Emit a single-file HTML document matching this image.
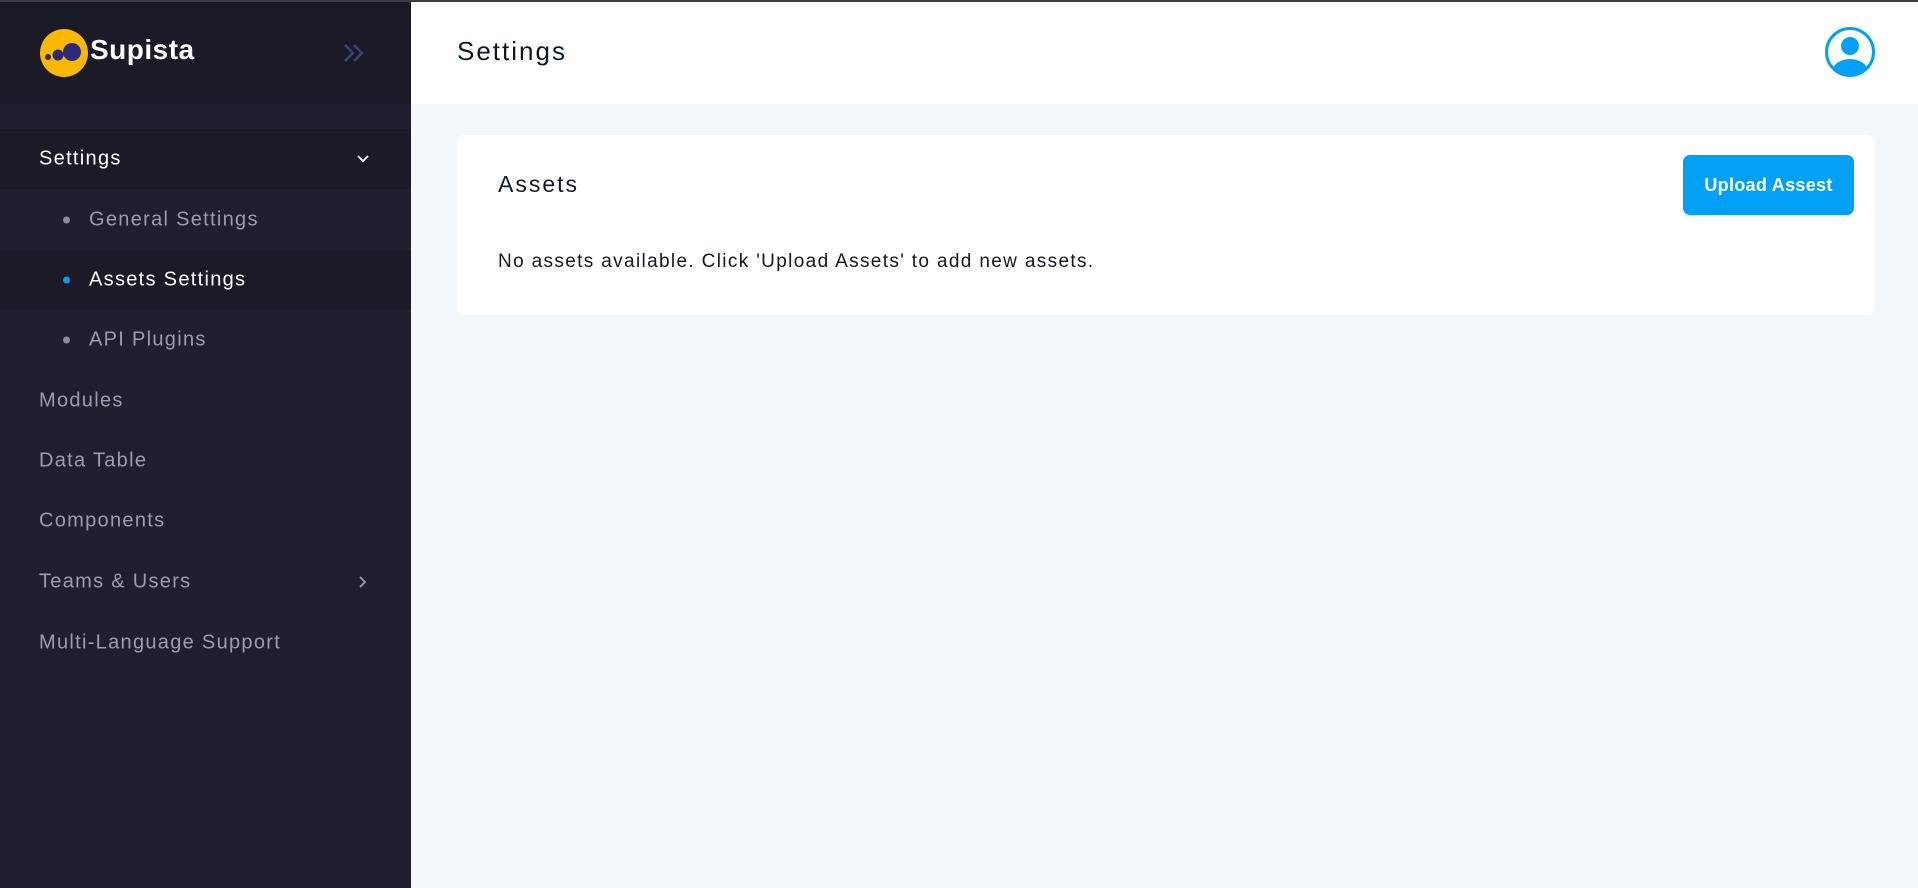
<!DOCTYPE html>
<html><head><meta charset="utf-8"><style>
*{margin:0;padding:0;box-sizing:border-box}
body{width:1918px;height:886px;overflow:hidden;background:#f4f7fa;font-family:"Liberation Sans",sans-serif;position:relative;border-top:2px solid #3a3d44}
.sb{position:absolute;left:0;top:0;width:411px;height:886px;background:#1f1f2d}
.logo{position:absolute;left:0;top:0;width:411px;height:102px;background:#1a1b27}
.row{position:absolute;left:0;width:411px;height:60px}
.it{position:absolute;left:39px;font-size:20px;color:#9c9cb0;transform:translateY(-50%);letter-spacing:1.3px;white-space:nowrap}
.sub{left:89px}
.dot{position:absolute;left:63px;width:7px;height:7px;border-radius:50%;background:#8e8ea0;transform:translateY(-50%)}
.main{position:absolute;left:411px;top:0;right:0;height:102px;background:#fff}
</style></head><body>
<div class="sb">
 <div class="logo"></div>
 <div class="row" style="top:127px;background:#1a1b27"></div>
 <div class="row" style="top:248px;background:#1a1b27"></div>
 <svg style="position:absolute;left:39px;top:26px" width="50" height="50" viewBox="0 0 50 50"><circle cx="25" cy="25" r="24" fill="#fbb801"/><circle cx="33" cy="24" r="9" fill="#2b2a7a"/><circle cx="19" cy="27" r="5.5" fill="#2b2a7a"/><circle cx="9" cy="29" r="3" fill="#2b2a7a"/></svg>
 <div style="position:absolute;left:90px;top:32px;font-size:28px;font-weight:bold;color:#fff;letter-spacing:0.5px">Supista</div>
 <svg style="position:absolute;left:343px;top:41px" width="22" height="20" viewBox="0 0 22 20"><path d="M2 2l8 8-8 8M11 2l8 8-8 8" fill="none" stroke="#3f3f78" stroke-width="2.5"/></svg>
 <div class="it" style="top:157px;color:#fff">Settings</div>
 <svg style="position:absolute;left:356px;top:152px" width="14" height="10" viewBox="0 0 14 10"><path d="M2 2l5 5 5-5" fill="none" stroke="#fff" stroke-width="1.8"/></svg>
 <div class="dot" style="top:218px"></div><div class="it sub" style="top:218px">General Settings</div>
 <div class="dot" style="top:278px;background:#03a1f6"></div><div class="it sub" style="top:278px;color:#fff">Assets Settings</div>
 <div class="dot" style="top:338px"></div><div class="it sub" style="top:338px">API Plugins</div>
 <div class="it" style="top:399px">Modules</div>
 <div class="it" style="top:459px">Data Table</div>
 <div class="it" style="top:519px">Components</div>
 <div class="it" style="top:580px">Teams &amp; Users</div>
 <svg style="position:absolute;left:358px;top:573px" width="10" height="14" viewBox="0 0 10 14"><path d="M2 2l5 5-5 5" fill="none" stroke="#9c9cb0" stroke-width="1.8"/></svg>
 <div class="it" style="top:641px">Multi-Language Support</div>
</div>
<div class="main">
 <div style="position:absolute;left:46px;top:34px;font-size:26px;color:#111827;letter-spacing:2px">Settings</div>
 <svg style="position:absolute;left:1413px;top:24px" width="52" height="52" viewBox="0 0 52 52"><defs><clipPath id="c"><circle cx="26" cy="26" r="23"/></clipPath></defs><circle cx="26" cy="26" r="23.5" fill="none" stroke="#03a1f6" stroke-width="3"/><circle cx="26" cy="20" r="9" fill="#03a1f6"/><ellipse cx="26" cy="46" rx="18" ry="13" fill="#03a1f6" clip-path="url(#c)"/></svg>
</div>
<div style="position:absolute;left:457px;top:133px;width:1418px;height:180px;background:#fff;border-radius:8px">
 <div style="position:absolute;left:41px;top:36px;font-size:23px;color:#111827;letter-spacing:2px">Assets</div>
 <div style="position:absolute;left:41px;top:116px;font-size:19px;color:#111827;letter-spacing:1.35px;white-space:nowrap">No assets available. Click 'Upload Assets' to add new assets.</div>
 <div style="position:absolute;left:1226px;top:20px;width:171px;height:60px;background:#03a1f6;border-radius:7px;color:#fff;font-weight:bold;font-size:18px;line-height:60px;text-align:center;letter-spacing:0.3px">Upload Assest</div>
</div>
</body></html>
